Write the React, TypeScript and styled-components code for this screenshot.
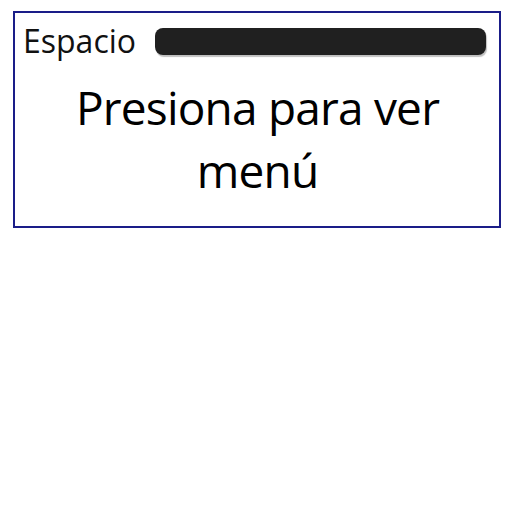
import React from "react";
import styled, { createGlobalStyle } from "styled-components";

const Global = createGlobalStyle`
  html, body { margin: 0; padding: 0; background: #ffffff; }
  body { font-family: "Open Sans", "Noto Sans", sans-serif; }
`;

const Page = styled.div`
  padding: 11px 11px 0 13px;
`;

const Card = styled.div`
  box-sizing: border-box;
  width: 488px;
  height: 217px;
  border: 2px solid #1a1d88;
  display: flex;
  flex-direction: column;
  padding: 6px 13px 0 8px;
`;

const Header = styled.div`
  display: flex;
  align-items: center;
  gap: 19px;
  height: 44px;
`;

const Label = styled.span`
  font-size: 32px;
  color: #111;
  line-height: 1;
`;

const Bar = styled.div`
  flex: 1;
  height: 27px;
  background: #202020;
  border-radius: 8px;
  box-shadow: 1px 2px 1px rgba(0, 0, 0, 0.25);
`;

const Message = styled.div`
  text-align: center;
  font-size: 46px;
  line-height: 63px;
  letter-spacing: -0.8px;
  color: #000;
  margin-top: 13px;
  padding-left: 6px;
`;

export default function App() {
  return (
    <>
      <Global />
      <Page>
        <Card>
          <Header>
            <Label>Espacio</Label>
            <Bar />
          </Header>
          <Message>
            Presiona para ver
            <br />
            menú
          </Message>
        </Card>
      </Page>
    </>
  );
}
